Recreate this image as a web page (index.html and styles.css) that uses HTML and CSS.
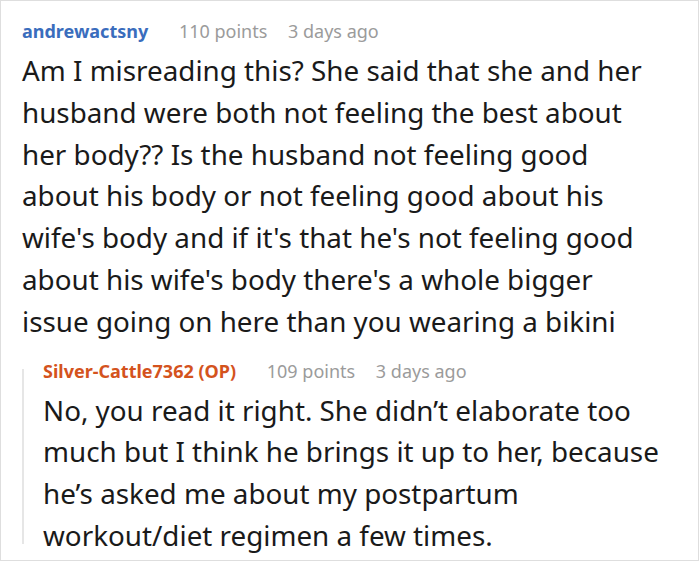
FILE: index.html
```html
<!DOCTYPE html>
<html lang="en">
<head>
<meta charset="utf-8">
<link rel="stylesheet" href="styles.css">
</head>
<body>
<div class="card">
  <div class="comment">
    <div class="meta">
      <span class="author">andrewactsny</span>
      <span class="points">110 points</span>
      <span class="date">3 days ago</span>
    </div>
    <p class="text">Am I misreading this? She said that she and her husband were both not feeling the best about her body?? Is the husband not feeling good about his body or not feeling good about his wife's body and if it's that he's not feeling good about his wife's body there's a whole bigger issue going on here than you wearing a bikini</p>
    <div class="reply">
      <div class="meta">
        <span class="author op">Silver-Cattle7362 (OP)</span>
        <span class="points">109 points</span>
        <span class="date">3 days ago</span>
      </div>
      <p class="text">No, you read it right. She didn’t elaborate too much but I think he brings it up to her, because he’s asked me about my postpartum workout/diet regimen a few times.</p>
    </div>
  </div>
</div>
</body>
</html>
```
FILE: styles.css
```css
html, body {
  margin: 0;
  padding: 0;
  background: #ffffff;
}
.card {
  width: 699px;
  height: 561px;
  box-sizing: border-box;
  border: 1px solid #dedede;
  background: #fff;
  font-family: "Noto Sans", "Open Sans", sans-serif;
  color: #1a1a1a;
  overflow: hidden;
}
.comment {
  width: 643px;
  padding: 11px 0 0 21px;
}
.meta {
  font-size: 18px;
  line-height: 38px;
  white-space: nowrap;
}
.author {
  font-weight: 700;
  color: #3a6dbd;
}
.author.op {
  color: #d4531d;
}
.points {
  color: #9b9b9b;
  margin-left: 26px;
}
.date {
  color: #9b9b9b;
  margin-left: 16px;
}
.text {
  margin: 0;
  font-size: 27.8px;
  line-height: 41.8px;
}
.reply {
  position: relative;
  margin-top: 9px;
  padding-left: 21px;
}
.reply::before {
  content: "";
  position: absolute;
  left: 0;
  top: 17px;
  bottom: 13px;
  width: 2px;
  background: #e6e6e6;
}
```
